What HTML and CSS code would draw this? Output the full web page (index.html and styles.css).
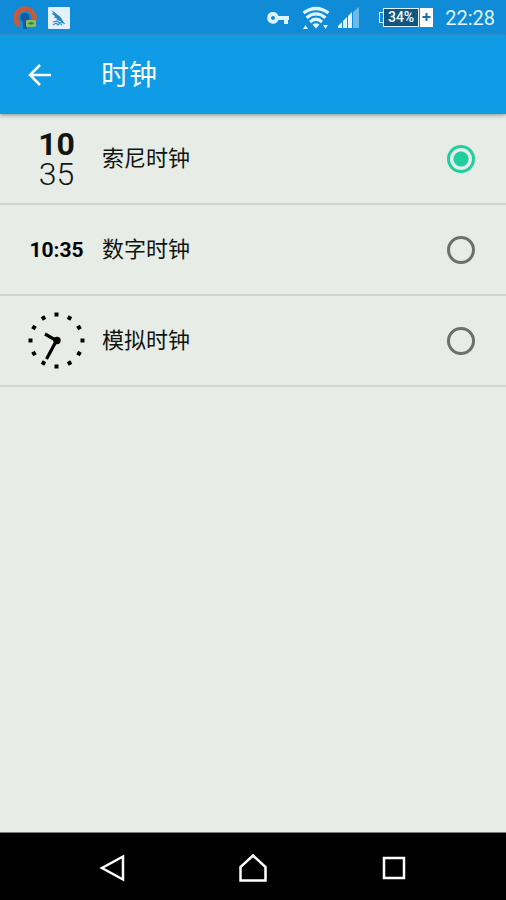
FILE: index.html
```html
<!DOCTYPE html>
<html lang="zh-CN">
<head>
<meta charset="utf-8">
<meta name="viewport" content="width=device-width, initial-scale=1">
<title>时钟</title>
<link rel="stylesheet" href="styles.css">
</head>
<body>
<div class="status">
  <svg width="24" height="24" viewBox="0 0 24 24" aria-hidden="true">
    <path d="M6.500 19.500A9.300 9.300 0 1 1 20 17" fill="none" stroke="#c85a3c" stroke-width="5"/>
    <circle cx="12" cy="11.500" r="4.500" fill="#155aa0"/>
    <path d="M10 13h4v10h-4z" fill="#155aa0"/>
    <rect x="13" y="14" width="10" height="7" rx="1" fill="#83bd62"/>
    <path d="M15 17.500q3-3 6 0q-3 2-6 0z" fill="#3b7647"/>
  </svg>
  <svg width="22" height="22" viewBox="0 0 22 22" aria-hidden="true">
    <rect width="22" height="22" rx="1" fill="#e2f1fa"/>
    <path d="M3.500 3l9 7 3 5 2 2-4-1-1-2-4-1 1-1-4-2 2-.5-4-3 2 0z" fill="#2686c4"/>
    <path d="M5 15l4-1 2 2 3-1M5 18l3-2 2 2 2-2 2 2" fill="none" stroke="#3b91c8" stroke-width="1.200"/>
  </svg>
  <div class="indicators">
    <svg width="23" height="14" viewBox="0 0 23 14" aria-hidden="true">
      <path fill="#def5ff" fill-rule="evenodd" d="M6 1a5.800 5.800 0 0 1 5.400 4H22v4h-1v4h-4V9h-5.600A5.800 5.800 0 1 1 6 1zm0 4a2 2 0 1 0 0 4 2 2 0 0 0 0-4z"/>
    </svg>
    <svg width="28" height="24" viewBox="0 0 28 24" aria-hidden="true">
      <g fill="none" stroke="#def5ff" stroke-width="3.200">
        <path d="M1.500 7Q14-2 26.500 7"/>
        <path d="M4.500 11.700Q14 4 23.500 11.700"/>
        <path d="M8 16Q14 10.500 20 16"/>
      </g>
      <path d="M10.500 18.500q3.500-2.500 7 0L14 22.500zM1 23l2.500-4L6 23zM21 19h5l-2.500 4z" fill="#def5ff"/>
    </svg>
    <svg class="signal" width="21" height="21" viewBox="0 0 21 21" aria-hidden="true">
      <path d="M0 21v-2l4-4v6zM5 21v-7l4-4v11zM10 21V9l4-4v16z" fill="#def5ff"/>
      <path d="M15 21V5l6-5v21z" fill="#6db9e8"/>
    </svg>
    <div class="battery">
      <span class="nub"></span><span class="level">34%</span>
      <svg width="14" height="19" viewBox="0 0 14 19" aria-hidden="true">
        <path d="M1 0h13v19H1z" fill="#fff"/>
        <path d="M7.500 5v8M3.500 9h8" stroke="#1472aa" stroke-width="2"/>
      </svg>
    </div>
    <time>22:28</time>
  </div>
</div>
<header class="appbar">
  <button class="back" type="button" aria-label="返回">
    <svg width="24" height="24" viewBox="0 0 24 24"><path d="M23 12H2M12 2L2 12l10 10" fill="none" stroke="#fff" stroke-width="2.500"/></svg>
  </button>
  <h1>时钟</h1>
</header>
<main>
  <label class="row">
    <span class="preview sony"><b>10</b><span>35</span></span>
    <span class="name">索尼时钟</span>
    <input type="radio" name="clock" checked>
  </label>
  <label class="row">
    <span class="preview digital">10:35</span>
    <span class="name">数字时钟</span>
    <input type="radio" name="clock">
  </label>
  <label class="row">
    <span class="preview">
      <svg width="57" height="57" viewBox="-28.500 -28.500 57 57" aria-hidden="true">
        <g id="ticks">
          <path d="M-2-28h4v4h-4zM-2 24h4v4h-4zM-28-2h4v4h-4zM24-2h4v4h-4z"/>
        </g>
        <use href="#ticks" transform="rotate(30)"/>
        <use href="#ticks" transform="rotate(60)"/>
        <path d="M-11.500-6.500L0 0l-10 18.500" fill="none" stroke="#000" stroke-width="3.200"/>
        <circle cx=".5" r="3.700"/>
      </svg>
    </span>
    <span class="name">模拟时钟</span>
    <input type="radio" name="clock">
  </label>
</main>
<nav class="navbar">
  <button type="button" aria-label="后退"><svg width="28" height="28" viewBox="0 0 28 28"><path d="M25 2.500v23L4 14z"/></svg></button>
  <button type="button" aria-label="主屏幕"><svg width="28" height="28" viewBox="0 0 28 28"><path d="M14 1.500l12.500 11.500v13.500h-25V13z"/></svg></button>
  <button type="button" aria-label="最近任务"><svg width="28" height="28" viewBox="0 0 28 28"><path d="M4 4h20v20H4z"/></svg></button>
</nav>
</body>
</html>
```
FILE: styles.css
```css
* { box-sizing: border-box; }

body {
  margin: 0;
  min-height: 100vh;
  display: flex;
  flex-direction: column;
  background: #e7ece6;
  color: #101510;
  font-family: Roboto, "Noto Sans CJK SC", sans-serif;
}

svg { display: block; flex: none; }

button {
  display: flex;
  align-items: center;
  justify-content: center;
  padding: 0;
  border: 0;
  background: none;
}

.status {
  display: flex;
  align-items: center;
  gap: 11px;
  height: 35px;
  padding: 0 11px 0 13px;
  background: #108bd7;
}

.indicators {
  display: flex;
  align-items: center;
  gap: 12px;
  margin-left: auto;
  color: #def5ff;
}

.indicators time { font-size: 20px; }

.signal { margin-left: -4px; }

.battery {
  display: flex;
  align-items: center;
  margin-left: 8px;
}

.nub {
  width: 4px;
  height: 11px;
  border: 1px solid #def5ff;
  border-right: 0;
}

.level {
  height: 19px;
  padding: 0 4px;
  border: 1px solid #def5ff;
  background: #12567f;
  color: #fff;
  font-size: 14px;
  font-weight: 500;
  line-height: 17px;
}

.appbar {
  display: flex;
  align-items: center;
  height: 79px;
  padding-left: 28px;
  background: #109be7;
  color: #fff;
  box-shadow: 0 1px 4px #7f8f88;
  z-index: 1;
}

.back { width: 24px; height: 48px; }

h1 {
  margin: 0 0 0 49px;
  padding-top: 2px;
  font-size: 28px;
  font-weight: 400;
  line-height: 40px;
}

main { flex: 1; }

.row {
  display: flex;
  align-items: center;
  height: 91px;
  padding: 0 31px 0 11px;
  border-bottom: 2px solid #d0d6d1;
}

.preview {
  display: flex;
  align-items: center;
  justify-content: center;
  width: 91px;
}

.sony { flex-direction: column; font-size: 32px; line-height: 30px; }
.sony b { font-weight: 700; }
.sony span { font-weight: 300; }
.digital { font-size: 21px; font-weight: 700; color: #000; }

.name { flex: 1; font-size: 22px; line-height: 32px; }

.row input {
  appearance: none;
  width: 28px;
  height: 28px;
  margin: 0;
  border: 3px solid #6a706b;
  border-radius: 50%;
}

.row input:checked {
  border-color: #20cf9f;
  background: radial-gradient(circle, #20cf9f 7px, transparent 8px);
}

.navbar {
  display: grid;
  grid-template-columns: repeat(3, 1fr);
  height: 68px;
  padding: 2px 42px 0;
  border-top: 1px solid #777;
  background: #000;
}

.navbar path { fill: none; stroke: #fff; stroke-width: 2.500; }
```
